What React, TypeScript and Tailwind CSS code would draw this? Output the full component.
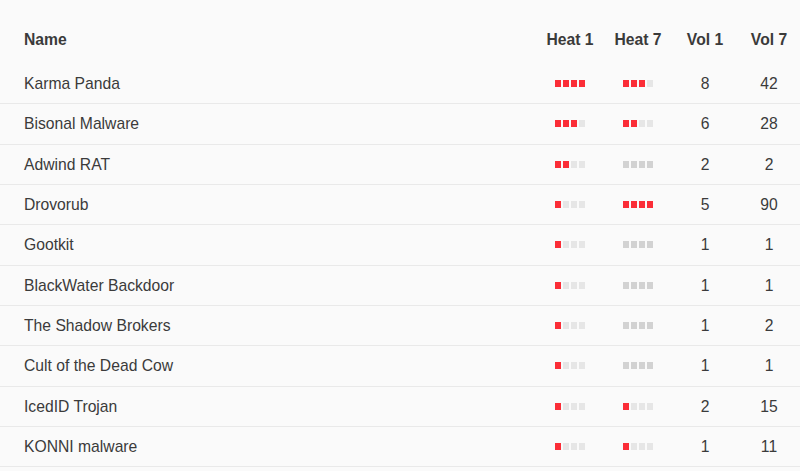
import React from "react";

type Row = { name: string; h1: number; h7: number; v1: number; v7: number };

const rows: Row[] = [
  { name: "Karma Panda", h1: 4, h7: 3, v1: 8, v7: 42 },
  { name: "Bisonal Malware", h1: 3, h7: 2, v1: 6, v7: 28 },
  { name: "Adwind RAT", h1: 2, h7: 0, v1: 2, v7: 2 },
  { name: "Drovorub", h1: 1, h7: 4, v1: 5, v7: 90 },
  { name: "Gootkit", h1: 1, h7: 0, v1: 1, v7: 1 },
  { name: "BlackWater Backdoor", h1: 1, h7: 0, v1: 1, v7: 1 },
  { name: "The Shadow Brokers", h1: 1, h7: 0, v1: 1, v7: 2 },
  { name: "Cult of the Dead Cow", h1: 1, h7: 0, v1: 1, v7: 1 },
  { name: "IcedID Trojan", h1: 1, h7: 1, v1: 2, v7: 15 },
  { name: "KONNI malware", h1: 1, h7: 1, v1: 1, v7: 11 },
];

function Heat({ n }: { n: number }) {
  return (
    <div className="flex gap-[1.7px]">
      {[0, 1, 2, 3].map((i) => (
        <div
          key={i}
          className={
            "w-[6px] h-[7px] " +
            (n === 0 ? "bg-[#d2d2d2]" : i < n ? "bg-[#fb2d37]" : "bg-[#e6e6e6]")
          }
        />
      ))}
    </div>
  );
}

export default function App() {
  return (
    <div
      className="w-[800px] h-[471px] bg-[#fafafa] text-[#3b3b3b] overflow-hidden"
      style={{ fontFamily: '"Liberation Sans", Arial, sans-serif' }}
    >
      <div className="flex items-center h-[64px] pt-[16px] text-[15.7px] font-bold text-[#3a3a3a]">
        <div className="flex-1 pl-[24px]">Name</div>
        <div className="w-[68px] text-center">Heat 1</div>
        <div className="w-[68px] text-center">Heat 7</div>
        <div className="w-[66px] text-center">Vol 1</div>
        <div className="w-[62px] text-center">Vol 7</div>
      </div>
      {rows.map((r) => (
        <div
          key={r.name}
          className="flex items-center h-[40.33px] border-b border-[#e9e9e9] text-[15.7px]"
        >
          <div className="flex-1 pl-[24px]">{r.name}</div>
          <div className="w-[68px] flex justify-center">
            <Heat n={r.h1} />
          </div>
          <div className="w-[68px] flex justify-center">
            <Heat n={r.h7} />
          </div>
          <div className="w-[66px] text-center">{r.v1}</div>
          <div className="w-[62px] text-center">{r.v7}</div>
        </div>
      ))}
    </div>
  );
}
